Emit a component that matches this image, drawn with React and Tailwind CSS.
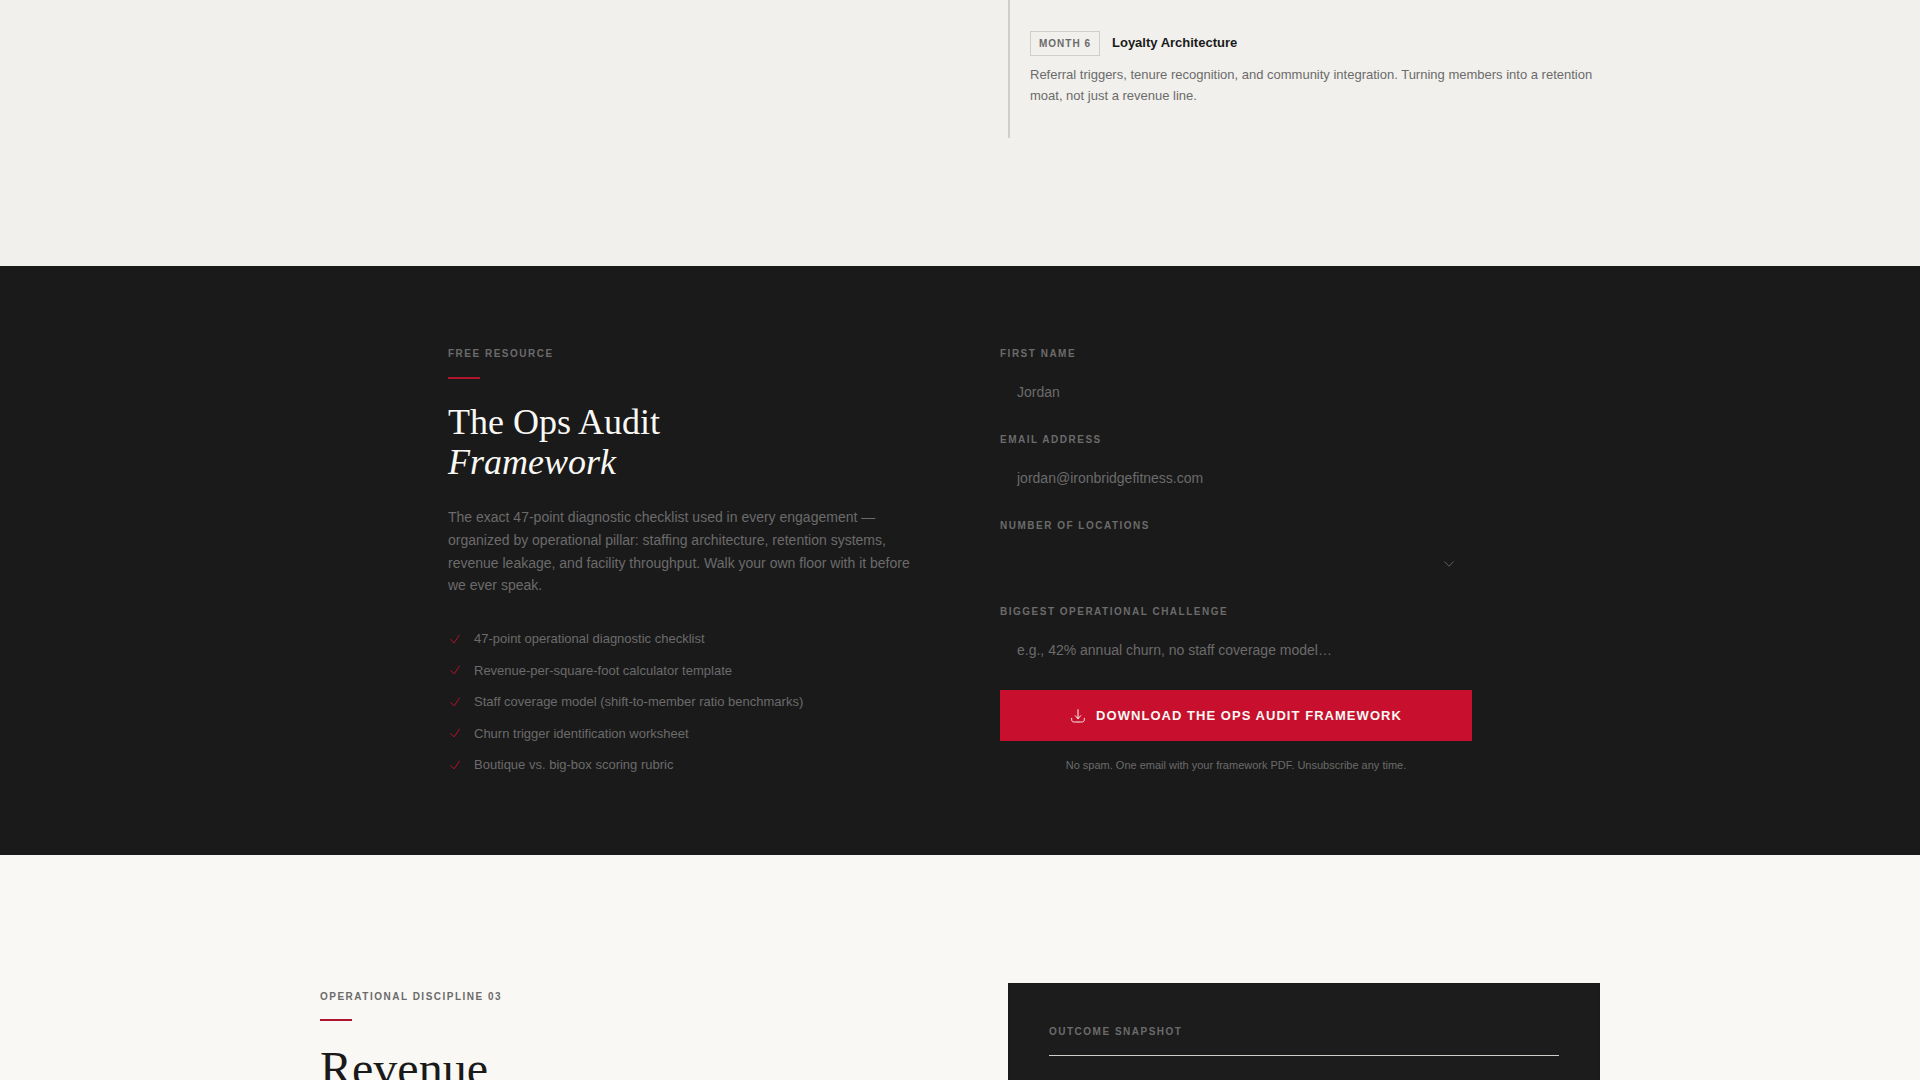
const eyebrow = "text-[10px] leading-[15px] font-bold uppercase tracking-[0.15em] text-[#6b6b6b]";
const field =
  "block h-[47px] w-full appearance-none rounded-none border border-transparent bg-transparent px-4 pb-0.5 text-sm text-[#f9f8f4] placeholder:text-[#6b6b6b] placeholder:opacity-100 outline-none";

const checklist = [
  "47-point operational diagnostic checklist",
  "Revenue-per-square-foot calculator template",
  "Staff coverage model (shift-to-member ratio benchmarks)",
  "Churn trigger identification worksheet",
  "Boutique vs. big-box scoring rubric",
];

function CheckIcon() {
  return (
    <svg className="size-[14px] shrink-0" viewBox="0 0 24 24" fill="none" stroke="#c8102e" strokeWidth="1.5" strokeLinecap="round" strokeLinejoin="round" aria-hidden="true">
      <path d="m4.5 12.75 6 6 9-13.5" />
    </svg>
  );
}

function DownloadIcon() {
  return (
    <svg className="size-4 shrink-0" viewBox="0 0 24 24" fill="none" stroke="currentColor" strokeWidth="1.5" strokeLinecap="round" strokeLinejoin="round" aria-hidden="true">
      <path d="M2.5 15.5c0 2.5 0 3.7.9 4.6.9.9 2.1.9 5.1.9h7c3 0 4.200 0 5.100-.9.9-.9.9-2.100.9-4.600" />
      <path d="M12 2.500v13.500m0 0 4-4.375M12 16l-4-4.375" />
    </svg>
  );
}

function Field({ id, label, children }) {
  return (
    <div className="flex flex-col gap-2">
      <label htmlFor={id} className={eyebrow}>{label}</label>
      {children}
    </div>
  );
}

function Milestone() {
  return (
    <section className="bg-[#f1f0ec] px-8 pb-32">
      <div className="mx-auto grid max-w-[1280px] grid-cols-2 gap-24">
        <div className="col-start-2 border-l-2 border-[#d0cec9] pt-[31px] pb-8 pl-5">
          <div className="mb-2 flex items-baseline gap-3">
            <span className="border border-[#d0cec9] px-2 py-1 text-[10px] leading-[15px] font-bold tracking-[0.1em] text-[#6b6b6b]">MONTH 6</span>
            <h3 className="text-[13px] leading-5 font-bold text-[#1a1a1a]">Loyalty Architecture</h3>
          </div>
          <p className="text-[13px] leading-[21px] text-[#6b6b6b]">
            Referral triggers, tenure recognition, and community integration. Turning members into a retention moat, not just a revenue line.
          </p>
        </div>
      </div>
    </section>
  );
}

function Resource() {
  return (
    <section className="bg-[#1a1a1a] px-8 py-20">
      <div className="mx-auto grid max-w-5xl grid-cols-2 gap-20">
        <div>
          <p className={eyebrow}>Free Resource</p>
          <div className="mt-4 mb-6 h-0.5 w-8 bg-[#b01530]" />
          <h2 className="mb-6 font-['Liberation_Serif',serif] text-4xl leading-[1.1] text-[#f9f8f4]">
            The Ops Audit
            <br />
            <em>Framework</em>
          </h2>
          <p className="mb-8 text-sm leading-relaxed text-[#6b6b6b]">
            The exact 47-point diagnostic checklist used in every engagement — organized by operational pillar: staffing architecture, retention systems, revenue leakage, and facility throughput. Walk your own floor with it before we ever speak.
          </p>
          <ul className="flex flex-col gap-3">
            {checklist.map((item) => (
              <li key={item} className="flex items-center gap-3 text-[13px] leading-normal text-[#6b6b6b]">
                <CheckIcon />
                {item}
              </li>
            ))}
          </ul>
        </div>
        <form className="flex flex-col gap-4" onSubmit={(e) => e.preventDefault()}>
          <Field id="first-name" label="First Name">
            <input id="first-name" type="text" placeholder="Jordan" className={field} />
          </Field>
          <Field id="email" label="Email Address">
            <input id="email" type="email" placeholder="jordan@ironbridgefitness.com" className={field} />
          </Field>
          <Field id="locations" label="Number of Locations">
            <div className="relative">
              <select id="locations" defaultValue="" className={field}>
                <option value="" />
                <option>1</option>
                <option>2–3</option>
                <option>4+</option>
              </select>
              <svg className="pointer-events-none absolute top-4 right-4 size-[14px]" viewBox="0 0 24 24" fill="none" stroke="#6b6b6b" strokeWidth="1.5" strokeLinecap="round" strokeLinejoin="round" aria-hidden="true">
                <path d="m19.5 8.25-7.5 7.5-7.5-7.5" />
              </svg>
            </div>
          </Field>
          <Field id="challenge" label="Biggest Operational Challenge">
            <input id="challenge" type="text" placeholder="e.g., 42% annual churn, no staff coverage model…" className={field} />
          </Field>
          <button type="submit" className="flex h-[51px] items-center justify-center gap-2.5 bg-[#c8102e] px-8 text-[13px] leading-5 font-bold tracking-[0.08em] text-[#f9f8f4] uppercase">
            <DownloadIcon />
            Download the Ops Audit Framework
          </button>
          <p className="text-center text-[11px] leading-4 text-[#6b6b6b]">No spam. One email with your framework PDF. Unsubscribe any time.</p>
        </form>
      </div>
    </section>
  );
}

function Discipline() {
  return (
    <section className="bg-[#f9f8f4] px-8 py-32">
      <div className="mx-auto grid max-w-[1280px] grid-cols-2 gap-24">
        <div className="pt-1.5">
          <p className={eyebrow}>Operational Discipline 03</p>
          <div className="mt-[15px] mb-6 h-0.5 w-8 bg-[#b01530]" />
          <h2 className="font-['Liberation_Serif',serif] text-5xl leading-[48px] text-[#1a1a1a]">Revenue</h2>
        </div>
        <div className="min-h-40 border border-[#1a1a1a] bg-[#1c1c1c] p-10">
          <p className={`${eyebrow} border-b border-[#d0cec9] pb-4`}>Outcome Snapshot</p>
        </div>
      </div>
    </section>
  );
}

export default function App() {
  return (
    <main className="h-screen overflow-hidden bg-[#f9f8f4] font-['Liberation_Sans',Arial,sans-serif]">
      <Milestone />
      <Resource />
      <Discipline />
    </main>
  );
}
